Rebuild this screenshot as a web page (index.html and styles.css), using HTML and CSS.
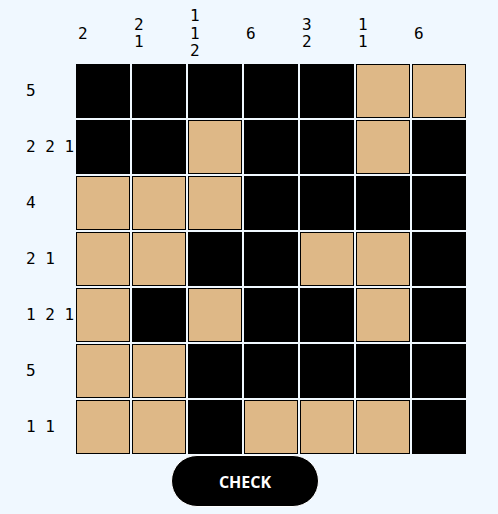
FILE: index.html
```html
<!DOCTYPE html>
<html>
<head>
<meta charset="utf-8">
<link rel="stylesheet" href="styles.css">
</head>
<body>
<div class="board">
  <div class="corner"></div>
  <div class="cclue"><span>2</span></div>
  <div class="cclue"><span>2</span><span>1</span></div>
  <div class="cclue"><span>1</span><span>1</span><span>2</span></div>
  <div class="cclue"><span>6</span></div>
  <div class="cclue"><span>3</span><span>2</span></div>
  <div class="cclue"><span>1</span><span>1</span></div>
  <div class="cclue"><span>6</span></div>

  <div class="rclue">5</div>
  <div class="cell b"></div><div class="cell b"></div><div class="cell b"></div><div class="cell b"></div><div class="cell b"></div><div class="cell t"></div><div class="cell t"></div>

  <div class="rclue">2 2 1</div>
  <div class="cell b"></div><div class="cell b"></div><div class="cell t"></div><div class="cell b"></div><div class="cell b"></div><div class="cell t"></div><div class="cell b"></div>

  <div class="rclue">4</div>
  <div class="cell t"></div><div class="cell t"></div><div class="cell t"></div><div class="cell b"></div><div class="cell b"></div><div class="cell b"></div><div class="cell b"></div>

  <div class="rclue">2 1</div>
  <div class="cell t"></div><div class="cell t"></div><div class="cell b"></div><div class="cell b"></div><div class="cell t"></div><div class="cell t"></div><div class="cell b"></div>

  <div class="rclue">1 2 1</div>
  <div class="cell t"></div><div class="cell b"></div><div class="cell t"></div><div class="cell b"></div><div class="cell b"></div><div class="cell t"></div><div class="cell b"></div>

  <div class="rclue">5</div>
  <div class="cell t"></div><div class="cell t"></div><div class="cell b"></div><div class="cell b"></div><div class="cell b"></div><div class="cell b"></div><div class="cell b"></div>

  <div class="rclue">1 1</div>
  <div class="cell t"></div><div class="cell t"></div><div class="cell b"></div><div class="cell t"></div><div class="cell t"></div><div class="cell t"></div><div class="cell b"></div>
</div>
<div class="actions">
  <button class="check">CHECK</button>
</div>
</body>
</html>
```

FILE: styles.css
```css
html, body {
  margin: 0;
  padding: 0;
  background: #f0f8ff;
}
body {
  width: 498px;
  height: 514px;
  overflow: hidden;
  font-family: "DejaVu Sans Mono", monospace;
  font-size: 16px;
  color: #000;
}
.board {
  display: grid;
  grid-template-columns: 50px repeat(7, 54px);
  grid-template-rows: auto repeat(7, 54px);
  gap: 2px;
  padding: 7px 0 0 24px;
}
.cclue {
  display: flex;
  flex-direction: column;
  justify-content: center;
  padding: 0 0 2px 2px;
  line-height: 17.6px;
  white-space: pre;
}
.rclue {
  display: flex;
  align-items: center;
  padding-left: 2px;
  white-space: pre;
  line-height: 18px;
}
.cell {
  box-sizing: border-box;
  width: 54px;
  height: 54px;
}
.cell.b {
  background: #000;
}
.cell.t {
  background: #deb887;
  border: 1px solid #000;
}
.actions {
  display: flex;
  justify-content: center;
  width: 490px;
  padding-top: 1px;
}
.check {
  box-sizing: border-box;
  width: 148px;
  height: 52px;
  border: 1px solid #fff;
  border-radius: 26px;
  background: #000;
  color: #fff;
  font-family: "Open Sans", sans-serif;
  font-weight: 700;
  font-size: 16px;
  padding: 3px 0 0;
}
```
